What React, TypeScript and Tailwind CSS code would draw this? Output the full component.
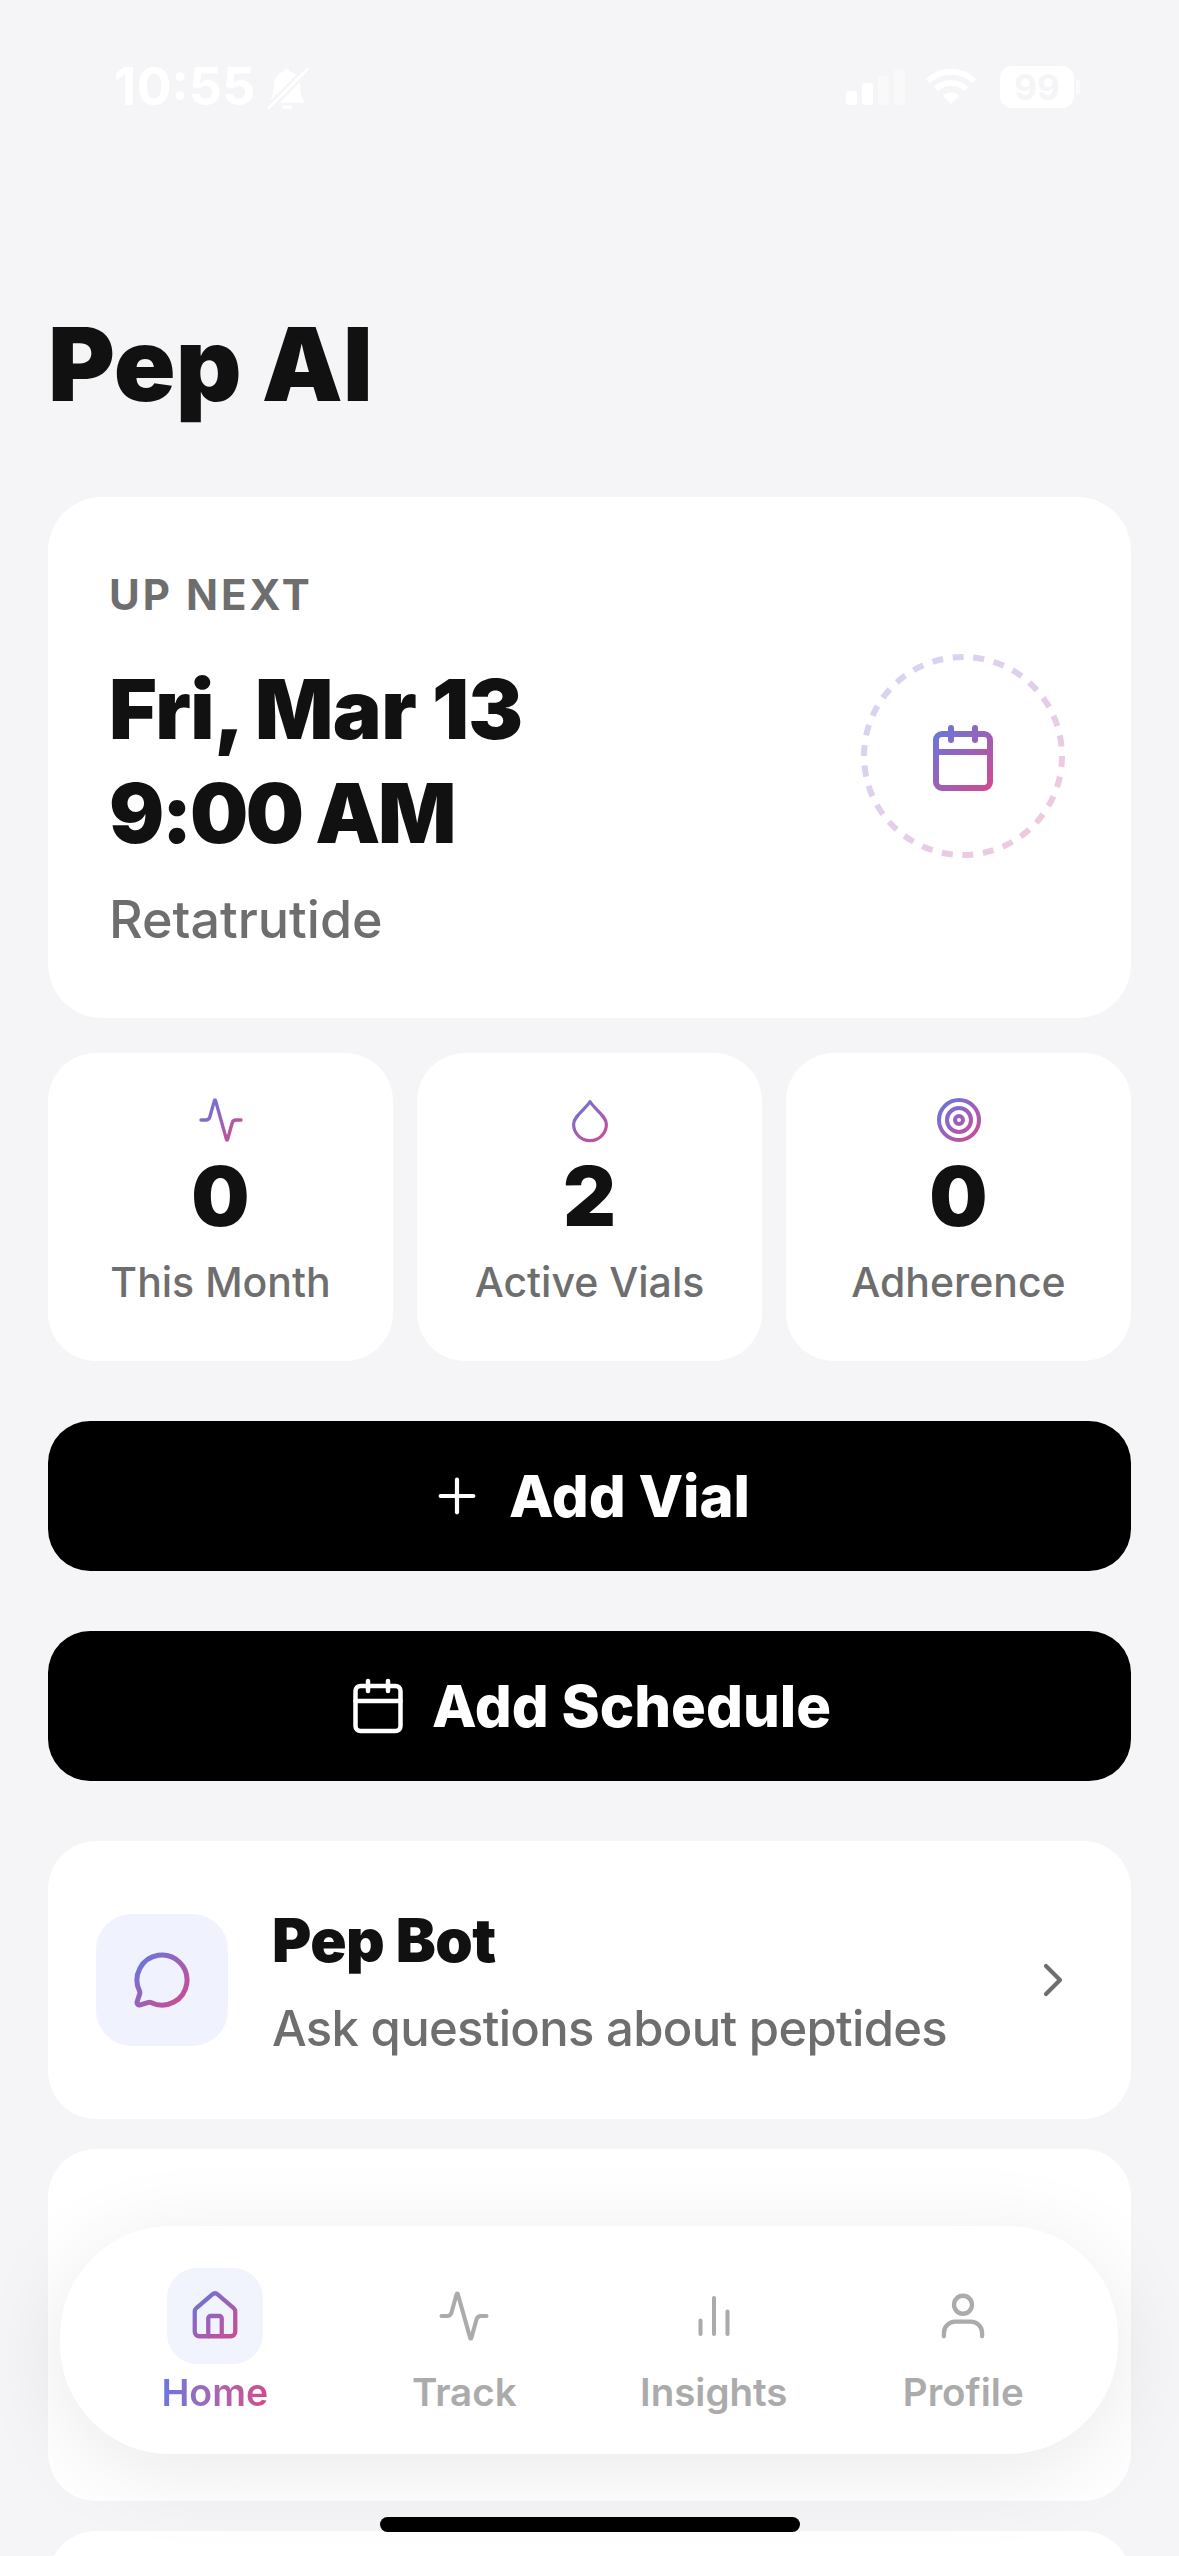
import { Activity, Calendar, ChevronRight, House, MessageCircle, Plus, Target } from "lucide-react";
import { BsBellSlashFill } from "react-icons/bs";

const font = { fontFamily: "Inter, 'Noto Sans', sans-serif" };

// stroke gradient is shared by all icons, in the icons' own 24 unit box
const GRAD = "url(#brand)";

const StatusBar = () => (
  <div className="flex h-[42px] items-center justify-between pl-[114px] pr-[99px] text-white">
    <div className="flex items-center gap-[11px]">
      <span className="text-[52px] leading-none font-bold">10:55</span>
      <BsBellSlashFill className="h-[44px] w-[42px]" />
    </div>
    <div className="flex items-center">
      <div className="mr-[20px] flex items-end gap-[5px]">
        <div className="h-[14px] w-[11px] rounded-[3px] bg-white" />
        <div className="h-[22px] w-[11px] rounded-[3px] bg-white" />
        <div className="h-[29px] w-[11px] rounded-[3px] bg-white/40" />
        <div className="h-[36px] w-[11px] rounded-[3px] bg-white/40" />
      </div>
      <svg viewBox="0 0 52 38" className="mr-[23px] h-[38px] w-[52px]" fill="none" stroke="#fff" strokeWidth="6">
        <path d="M3 13a33 33 0 0 1 46 0" />
        <path d="M11 21a22 22 0 0 1 30 0" />
        <path d="M26 36l-8-8a11 11 0 0 1 16 0z" fill="#fff" stroke="none" />
      </svg>
      <div className="flex h-[42px] w-[74px] items-center justify-center rounded-[12px] bg-white text-[35px] leading-none font-bold text-[#f5f5f7]">
        99
      </div>
      <div className="ml-[2px] h-[14px] w-[4px] rounded-r-[3px] bg-white/60" />
    </div>
  </div>
);

const StatCard = ({ icon, value, label }: { icon: React.ReactNode; value: string; label: string }) => (
  <div className="flex h-[308px] flex-1 flex-col items-center rounded-[48px] bg-white pt-[43px]">
    {icon}
    <div className="mt-[3px] text-[82px] leading-[100px] font-black text-[#111111]">{value}</div>
    <div className="mt-[11px] text-[41px] leading-[48px] font-medium text-[#6e6e6e]">{label}</div>
  </div>
);

const ActionButton = ({ icon, label }: { icon: React.ReactNode; label: string }) => (
  <button className="flex h-[150px] w-full items-center justify-center gap-[24px] rounded-[42px] bg-black text-[58px] font-extrabold text-white">
    {icon}
    {label}
  </button>
);

const NavItem = ({ icon, label }: { icon: React.ReactNode; label: string }) => (
  <div className="flex flex-1 flex-col items-center">
    <div className="flex h-[96px] w-[96px] items-center justify-center">{icon}</div>
    <span className="mt-[5px] text-[38.5px] leading-[46px] font-semibold text-[#ababab]">{label}</span>
  </div>
);

const App = () => {
  return (
    <div style={font} className="relative h-[2556px] w-[1179px] overflow-hidden bg-[#f5f5f7]">
      <svg className="absolute h-0 w-0">
        <defs>
          <linearGradient id="brand" gradientUnits="userSpaceOnUse" x1="3" y1="3" x2="22" y2="22">
            <stop offset="0" stopColor="#6a76dc" />
            <stop offset="1" stopColor="#d04a90" />
          </linearGradient>
        </defs>
      </svg>

      <div className="pt-[66px]">
        <StatusBar />
      </div>

      <div className="px-[48px]">
        <h1 className="mt-[196px] text-[102px] leading-[121px] font-black text-[#111111]">Pep AI</h1>

        <div className="mt-[72px] flex h-[521px] items-center justify-between rounded-[54px] bg-white pr-[66px] pl-[61px]">
          <div className="pt-[4px]">
            <div className="text-[42px] leading-[52px] font-bold tracking-[3px] text-[#6e6e6e]">UP NEXT</div>
            <div className="mt-[37px] text-[82px] leading-[104px] font-black text-[#111111]">
              <div className="tracking-[-0.6px]">Fri, Mar 13</div>
              <div className="tracking-[-2.5px]">9:00 AM</div>
            </div>
            <div className="mt-[23px] text-[52px] leading-[62px] font-medium text-[#6e6e6e]">Retatrutide</div>
          </div>
          <div className="relative mb-[3px] flex h-[204px] w-[204px] items-center justify-center">
            <svg viewBox="0 0 204 204" className="absolute inset-0 h-full w-full" fill="none">
              <defs>
                <linearGradient id="ring" x1="0" y1="0" x2="1" y2="1">
                  <stop offset="0" stopColor="#6a76dc" />
                  <stop offset="1" stopColor="#d4478c" />
                </linearGradient>
              </defs>
              <circle cx="102" cy="102" r="99" stroke="url(#ring)" strokeOpacity="0.3" strokeWidth="6" strokeDasharray="11 9.7" />
            </svg>
            <Calendar size={72} stroke={GRAD} className="mt-[4px]" />
          </div>
        </div>

        <div className="mt-[35px] flex gap-[24px]">
          <StatCard icon={<Activity size={48} stroke={GRAD} strokeWidth={1.7} />} value="0" label="This Month" />
          <StatCard
            icon={
              <svg viewBox="0 0 24 24" className="h-[48px] w-[48px]" fill="none" stroke={GRAD} strokeWidth="1.6" strokeLinejoin="round">
                <path d="M12 2.8C13.8 6.2 20.2 10 20.2 14.1a8.2 8.2 0 0 1-16.4 0C3.8 10 10.2 6.2 12 2.8z" />
              </svg>
            }
            value="2"
            label="Active Vials"
          />
          <StatCard icon={<Target size={48} stroke={GRAD} />} value="0" label="Adherence" />
        </div>

        <div className="mt-[60px] flex flex-col gap-[60px]">
          <ActionButton icon={<Plus size={56} strokeWidth={1.8} />} label="Add Vial" />
          <ActionButton icon={<Calendar size={60} strokeWidth={1.8} />} label="Add Schedule" />
        </div>

        <div className="mt-[60px] flex h-[278px] items-center rounded-[48px] bg-white pr-[50px] pl-[48px]">
          <div className="flex h-[132px] w-[132px] items-center justify-center rounded-[36px] bg-[#f0f2fd]">
            <MessageCircle size={60} stroke={GRAD} />
          </div>
          <div className="ml-[44px] flex-1 pt-[6px]">
            <div className="-mt-[3px] text-[60px] leading-[70px] font-black tracking-[-0.5px] text-[#111111]">Pep Bot</div>
            <div className="mt-[24px] text-[49px] leading-[60px] font-medium tracking-[-0.7px] text-[#6e6e6e]">Ask questions about peptides</div>
          </div>
          <ChevronRight size={56} strokeWidth={1.8} className="text-[#6e6e6e]" />
        </div>

        <div className="mt-[30px] h-[352px] rounded-[48px] bg-white pt-[67px] pl-[347px] text-[60px] leading-[72px] font-black text-[#111111]">
          Dosing Calculator
        </div>

        <div className="mt-[30px] h-[200px] rounded-[48px] bg-white" />
      </div>

      {/* floating tab bar */}
      <div className="absolute top-[2226px] left-[60px] flex h-[228px] w-[1058px] rounded-[110px] bg-white px-[30px] pt-[42px] shadow-[0_16px_90px_rgba(0,0,0,0.09)]">
        <div className="flex flex-1 flex-col items-center">
          <div className="flex h-[96px] w-[96px] items-center justify-center rounded-[30px] bg-[#f1f4fc]">
            <House size={54} strokeWidth={1.9} stroke={GRAD} />
          </div>
          <span className="mt-[6px] bg-gradient-to-r from-[#6a76dc] to-[#d4478c] bg-clip-text text-[37.5px] leading-[46px] font-semibold text-transparent">
            Home
          </span>
        </div>
        <NavItem icon={<Activity size={54} strokeWidth={1.8} className="text-[#ababab]" />} label="Track" />
        <NavItem
          icon={
            <svg viewBox="0 0 24 24" className="h-[54px] w-[54px]" fill="none" stroke="#ababab" strokeWidth="1.8" strokeLinecap="round">
              <path d="M6 20v-6M12 20V4M18 20V10" />
            </svg>
          }
          label="Insights"
        />
        <NavItem
          icon={
            <svg viewBox="0 0 24 24" className="h-[54px] w-[54px]" fill="none" stroke="#ababab" strokeWidth="1.9" strokeLinecap="round">
              <circle cx="12" cy="7" r="4" />
              <path d="M3.5 21v-1.5a5 5 0 0 1 5-5h7a5 5 0 0 1 5 5V21" />
            </svg>
          }
          label="Profile"
        />
      </div>

      <div className="absolute top-[2517px] left-[380px] h-[15px] w-[420px] rounded-full bg-black" />
    </div>
  );
};

export default App;
